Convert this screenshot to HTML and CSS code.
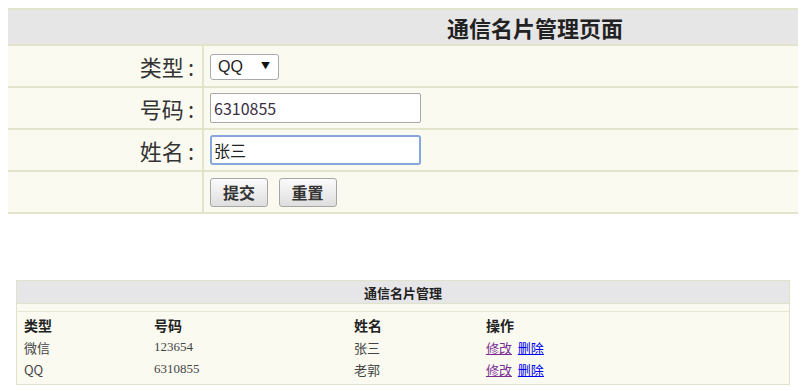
FILE: index.html
```html
<!DOCTYPE html>
<html lang="zh-CN">
  <head>
    <meta charset="UTF-8" />
    <meta name="viewport" content="width=device-width, initial-scale=1.0" />
    <title>通信名片管理页面</title>
    <link rel="stylesheet" href="styles.css">
  </head>
  <body>
    <form class="card-form">
      <table class="form-table">
        <tr>
          <th colspan="2" class="form-title">通信名片管理页面</th>
        </tr>
        <tr>
          <td class="label">类型<span class="colon">:</span></td>
          <td class="field">
            <span class="select-wrap">
              <select class="select">
                <option>QQ</option>
                <option>微信</option>
              </select>
            </span>
          </td>
        </tr>
        <tr>
          <td class="label">号码<span class="colon">:</span></td>
          <td class="field"><input type="text" class="text-input" value="6310855"></td>
        </tr>
        <tr>
          <td class="label">姓名<span class="colon">:</span></td>
          <td class="field"><input type="text" class="text-input focused" value="张三"></td>
        </tr>
        <tr>
          <td class="label"></td>
          <td class="field">
            <button type="button" class="btn">提交</button>
            <button type="reset" class="btn">重置</button>
          </td>
        </tr>
      </table>
    </form>

    <table class="list-table">
      <thead>
        <tr>
          <th colspan="4" class="list-title">通信名片管理</th>
        </tr>
        <tr class="gap"><td colspan="4"></td></tr>
      </thead>
      <tbody>
        <tr class="head-row">
          <th class="c1">类型</th>
          <th class="c2">号码</th>
          <th class="c3">姓名</th>
          <th class="c4">操作</th>
        </tr>
        <tr>
          <td>微信</td>
          <td class="num">123654</td>
          <td>张三</td>
          <td><a href="#" class="visited">修改</a> <a href="#">删除</a></td>
        </tr>
        <tr class="last">
          <td>QQ</td>
          <td class="num">6310855</td>
          <td>老郭</td>
          <td><a href="#" class="visited">修改</a> <a href="#">删除</a></td>
        </tr>
      </tbody>
    </table>
  </body>
</html>
```

FILE: styles.css
```css
html,
body {
  overflow-x: hidden;
}

body {
  margin: 8px;
  background: #ffffff;
  font-family: "Noto Sans CJK SC", "Liberation Sans", sans-serif;
  color: #333;
}

/* top form */
.card-form {
  margin: 0;
}

.form-table {
  width: 1054px;
  border-collapse: collapse;
  background: #fafaf1;
}

.form-table th,
.form-table td {
  border-top: 2px solid #e2e5cc;
  border-bottom: 2px solid #e2e5cc;
  padding: 0;
}

.form-title {
  height: 34px;
  background: #e6e6e6;
  font-size: 22px;
  font-weight: bold;
  color: #222;
  text-align: center;
  line-height: 34px;
}

.label {
  width: 186px;
  height: 40px;
  padding-right: 8px !important;
  text-align: right;
  font-size: 22px;
  color: #333;
  border-right: 2px solid #e2e5cc;
}

.colon {
  margin-left: 4px;
}

.field {
  padding-left: 6px !important;
}

.select-wrap {
  position: relative;
  display: inline-block;
}

.select-wrap::after {
  content: "▼";
  position: absolute;
  right: 9px;
  top: 7px;
  font-size: 9px;
  color: #111;
  pointer-events: none;
}

.select {
  appearance: none;
  -webkit-appearance: none;
  width: 69px;
  height: 26px;
  padding: 0 0 0 7px;
  border: 1px solid #aaa;
  border-radius: 3px;
  background: #fff;
  font-family: "Liberation Sans", sans-serif;
  font-size: 16px;
  color: #222;
  vertical-align: middle;
}

.text-input {
  box-sizing: border-box;
  width: 211px;
  height: 30px;
  padding: 0 3px;
  border: 1px solid #a9a9a9;
  border-radius: 2px;
  background: #fff;
  font-family: "Noto Sans CJK SC", "Liberation Sans", sans-serif;
  font-size: 16px;
  color: #3a2f45;
  vertical-align: middle;
}

.text-input.focused {
  border: 2px solid #86a6dc;
  border-radius: 3px;
  padding: 0 2px;
  color: #222;
}

.btn {
  box-sizing: border-box;
  width: 58px;
  height: 29px;
  margin-right: 7px;
  padding: 0;
  border: 1px solid #a6a6a6;
  border-radius: 3px;
  background: linear-gradient(#fbfbfb, #dedede);
  font-family: "Noto Sans CJK SC", sans-serif;
  font-size: 16px;
  font-weight: bold;
  color: #333;
  vertical-align: middle;
}

/* bottom list */
.list-table {
  width: 98%;
  margin: 66px auto 0;
  border-collapse: collapse;
  background: #fafaf1;
  border: 1px solid #e0e3cc;
  font-size: 13px;
  color: #444;
}

.list-title {
  height: 22px;
  padding: 0;
  background: #e6e6e8;
  font-size: 13px;
  font-weight: bold;
  color: #222;
  text-align: center;
  border-bottom: 1px solid #e0e3cc;
}

.gap td {
  height: 7px;
  padding: 0;
  border-bottom: 1px solid #e6e8d4;
}

.list-table tbody th,
.list-table tbody td {
  height: 22px;
  padding: 0 0 0 7px;
  text-align: left;
  vertical-align: middle;
  white-space: nowrap;
}

.head-row th {
  padding-top: 2px !important;
  font-weight: bold;
  font-size: 14px;
  color: #222;
}

.c1 {
  width: 123px;
}

.c2 {
  width: 193px;
}

.c3 {
  width: 125px;
}

.num {
  font-family: "Liberation Serif", serif;
  font-size: 13px;
}

.last td {
  padding-bottom: 4px !important;
}

.list-table a {
  color: #0000ee;
}

.list-table a.visited {
  color: #7b2f95;
  margin-right: 3px;
}
```
